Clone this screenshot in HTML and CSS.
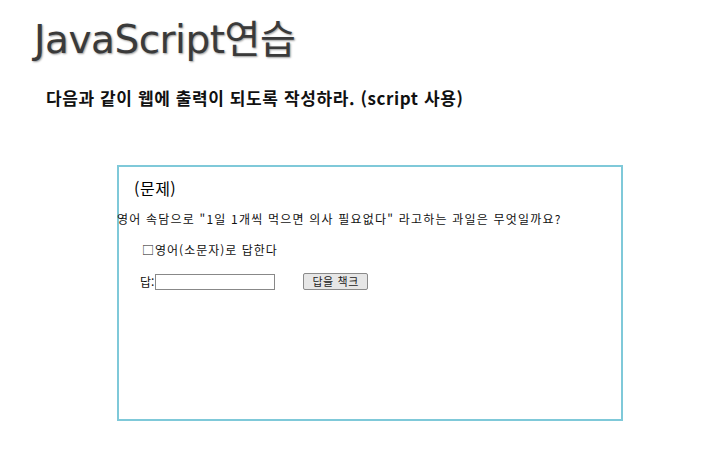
FILE: index.html
```html
<!DOCTYPE html>
<html lang="ko">
<head>
  <meta charset="UTF-8">
  <title>JavaScript연습</title>
  <link rel="stylesheet" href="styles.css">
</head>
<body>
  <h1 class="title">JavaScript연습</h1>
  <h2 class="task">다음과 같이 웹에 출력이 되도록 작성하라. (script 사용)</h2>

  <div class="quiz">
    <h3 class="quiz-head">(문제)</h3>
    <p class="question">영어 속담으로 "1일 1개씩 먹으면 의사 필요없다" 라고하는 과일은 무엇일까요?</p>
    <p class="hint">□영어(소문자)로 답한다</p>
    <div class="answer-row">
      <label for="answer">답:</label>
      <input type="text" id="answer">
      <button id="check">답을 책크</button>
    </div>
  </div>
</body>
</html>
```

FILE: styles.css
```css
body {
  margin: 0;
  padding: 0;
  background: #fff;
  font-family: 'Noto Sans', 'Noto Sans CJK KR', sans-serif;
  color: #000;
}
.title {
  margin: 0;
  padding: 16px 0 0 34px;
  font-family: 'DejaVu Sans', 'Noto Sans CJK KR', sans-serif;
  font-size: 39px;
  font-weight: normal;
  line-height: 48px;
  color: #3a3a3a;
  text-shadow: 1px 1px 2px #999;
  letter-spacing: -0.5px;
}
.task {
  margin: 0;
  padding: 23px 0 0 46px;
  font-family: 'Noto Sans CJK KR', sans-serif;
  font-size: 17px;
  font-weight: bold;
  line-height: 22px;
  letter-spacing: 0.6px;
  color: #111;
}
.quiz {
  width: 502px;
  height: 252px;
  margin: 56px 0 0 117px;
  border: 2px solid #7fc9d9;
  box-sizing: content-box;
}
.quiz-head {
  margin: 0;
  padding: 10px 0 0 15px;
  font-family: 'Noto Sans CJK KR', sans-serif;
  font-size: 16px;
  font-weight: normal;
  line-height: 22px;
  letter-spacing: 0.5px;
}
.question {
  margin: 11px 0 0 -2px;
  font-family: 'Noto Sans CJK KR', sans-serif;
  font-size: 12px;
  line-height: 18px;
  letter-spacing: 1.2px;
  color: #111;
}
.hint {
  margin: 13px 0 0 23px;
  font-family: 'Noto Sans CJK KR', sans-serif;
  font-size: 12px;
  line-height: 18px;
  letter-spacing: 1px;
  color: #111;
}
.answer-row {
  display: flex;
  align-items: center;
  margin: 14px 0 0 21px;
  font-family: 'Noto Sans CJK KR', sans-serif;
  font-size: 12px;
  color: #111;
}
.answer-row input {
  width: 116px;
  height: 12px;
  padding: 1px;
  margin: 0 0 0 1px;
  border: 1px solid #888;
  font-size: 12px;
}
.answer-row button {
  margin-left: 28px;
  height: 17px;
  padding: 0 8px;
  font-family: 'Noto Sans CJK KR', sans-serif;
  font-size: 11px;
  line-height: 15px;
  letter-spacing: 0.6px;
  background: #e6e6e6;
  border: 1px solid #8a8a8a;
  border-radius: 2px;
  color: #222;
}
```
